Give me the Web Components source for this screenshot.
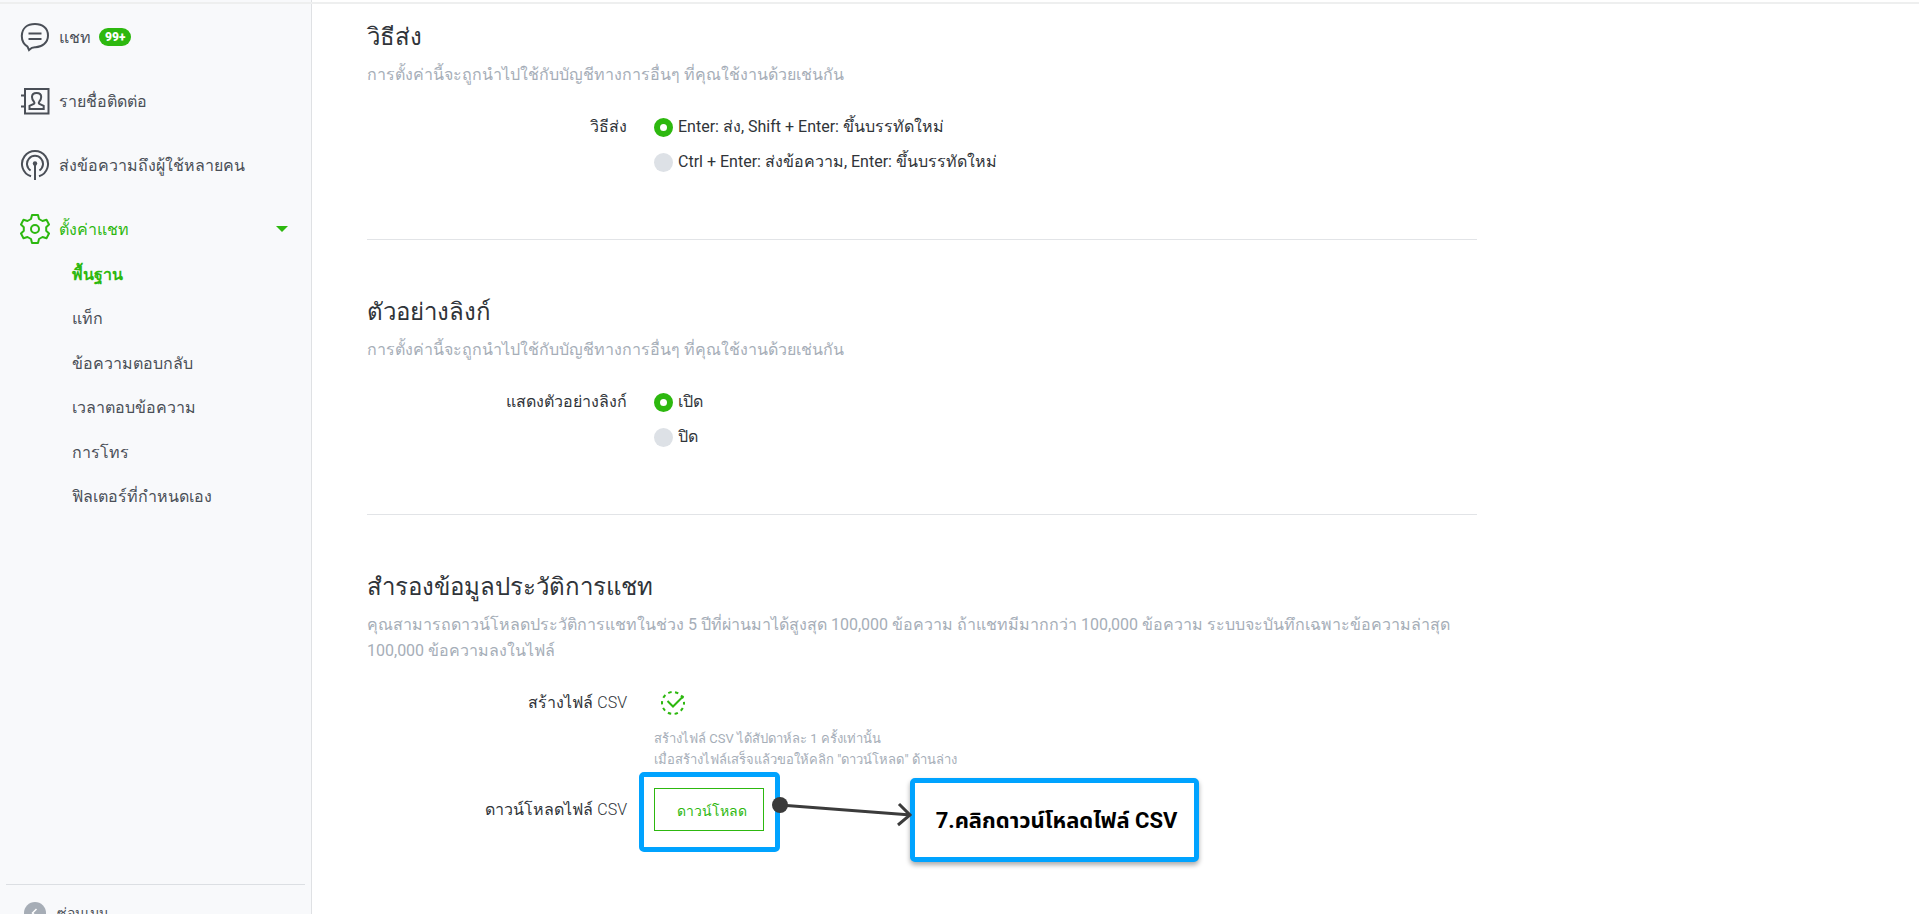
<!DOCTYPE html>
<html lang="th">
<head>
<meta charset="utf-8">
<meta name="viewport" content="width=device-width, initial-scale=1">
<title>ตั้งค่าแชท</title>
<style>
  body { margin: 0; font-family: Roboto, sans-serif; font-size: 16px; color: #303439; background: #fff; }
</style>
</head>
<body>
<chat-app></chat-app>

<script>
const define = (name, html, setup) => {
  const template = document.createElement('template');
  template.innerHTML = html;
  customElements.define(name, class extends HTMLElement {
    constructor() {
      super();
      this.attachShadow({ mode: 'open' }).append(template.content.cloneNode(true));
    }
    connectedCallback() { if (setup) setup(this, this.shadowRoot); }
  });
};

define('nav-item', `
  <style>
    :host { display: block; color: #4a4f57; }
    a { display: flex; align-items: center; height: 64px; padding: 0 23px 0 20px; color: inherit; text-decoration: none; }
    .icon { display: flex; width: 30px; margin-right: 9px; }
    :host([active]) { color: #2db80f; }
    .arrow { display: none; margin-left: auto; border: 6px solid transparent; border-top-color: currentColor; border-bottom: 0; }
    :host([active]) .arrow { display: block; }
  </style>
  <a href="#"><span class="icon"><slot name="icon"></slot></span><slot></slot><span class="arrow"></span></a>`);

define('count-badge', `
  <style>
    :host { display: block; margin-left: 8px; padding: 0 6px; height: 18px; border-radius: 9px; background: #2db80f; color: #fff; font-size: 12px; line-height: 18px; font-weight: 900; }
  </style><slot></slot>`);

define('sub-link', `
  <style>
    :host { display: flex; align-items: center; padding-left: 72px; color: #4a4f57; }
    :host([active]) { color: #2db80f; font-weight: 700; }
    a { color: inherit; text-decoration: none; }
  </style><a href="#"><slot></slot></a>`);

define('side-bar', `
  <style>
    :host { display: flex; flex-direction: column; box-sizing: border-box; width: 312px; flex: none; overflow: hidden; padding-top: 5px; background: #f8f9fb; border-right: 1px solid #dfe1e4; }
    .sub { display: grid; grid-auto-rows: 1fr; height: 267px; margin-top: -9px; }
    .foot { display: flex; align-items: center; flex: none; height: 56px; margin: auto 6px -27px; padding-left: 18px; gap: 11px; border-top: 1px solid #dcdfe3; color: #4a4f57; font-size: 14px; text-decoration: none; }
    svg { display: block; fill: none; stroke: currentColor; stroke-width: 2; }
  </style>
  <nav>
    <nav-item>
      <svg slot="icon" width="30" height="30" viewBox="0 0 30 30"><path d="M7.5 24.7C3.800 22.200 1.800 18.500 1.800 13.900 2 6 7.500 2 15 2s13 4.300 13 11.500S22 25 15.500 25.300c-2.500-.2-4.500.7-6.500 2.700z"/><path d="M8.500 11.500h13M8.500 17h13"/></svg>
      แชท<count-badge>99+</count-badge>
    </nav-item>
    <nav-item>
      <svg slot="icon" width="30" height="30" viewBox="0 0 30 30"><path d="M5 3h23.500v24.500H5zM1 9.500h4M1 20.500h4"/><path d="M9.500 23v-3.200l4.300-2c.8-.5.8-1.300.2-2-1.500-1.600-2-3.300-2-4.800 0-2.500 1.900-4 4.600-4s4.600 1.500 4.600 4c0 1.500-.5 3.200-2 4.800-.6.700-.6 1.500.2 2l4.300 2V23z"/></svg>
      รายชื่อติดต่อ
    </nav-item>
    <nav-item>
      <svg slot="icon" width="30" height="32" viewBox="0 0 30 32"><path d="M11 27.300A13 13 0 1 1 19 27.300M10.600 21.500A8 8 0 1 1 19.400 21.500M15 15v16"/><circle cx="15" cy="14.500" r="2.200" fill="currentColor" stroke="none"/></svg>
      ส่งข้อความถึงผู้ใช้หลายคน
    </nav-item>
    <nav-item active>
      <svg slot="icon" width="30" height="32" viewBox="0 0 30 32"><path stroke-linejoin="round" d="M12 2h6l1 4 3.500 2 4-1.200 2.500 4.700-2.800 2.800v3.400l2.800 2.800-2.500 4.700-4-1.200-3.500 2-1 4h-6l-1-4-3.500-2-4 1.200L1 20.500l2.800-2.800v-3.400L1 11.500l2.500-4.700 4 1.200L11 6z"/><circle cx="15" cy="16" r="4"/></svg>
      ตั้งค่าแชท
    </nav-item>
    <div class="sub">
      <sub-link active>พื้นฐาน</sub-link>
      <sub-link>แท็ก</sub-link>
      <sub-link>ข้อความตอบกลับ</sub-link>
      <sub-link>เวลาตอบข้อความ</sub-link>
      <sub-link>การโทร</sub-link>
      <sub-link>ฟิลเตอร์ที่กำหนดเอง</sub-link>
    </div>
  </nav>
  <a class="foot" href="#"><svg width="22" height="22" viewBox="0 0 22 22"><circle cx="11" cy="11" r="11" fill="#a6adb6" stroke="none"/><path d="M12.500 7l-4 4 4 4" stroke="#fff" stroke-width="1.500"/></svg>ซ่อนเมนู</a>`,
);

define('settings-section', `
  <style>
    :host { display: block; box-sizing: border-box; min-height: 275px; padding-top: 54px; border-bottom: 1px solid #e2e4e7; }
    :host([last]) { border-bottom: 0; }
    h2 { margin: 0; font-size: 24px; line-height: 36px; font-weight: 400; }
    p { margin: 7px 0 25px; line-height: 26px; color: #a6aeb8; font-size: 16px; }
  </style>
  <h2></h2><p><slot name="note"></slot></p><slot></slot>`,
  (el, root) => { root.querySelector('h2').textContent = el.getAttribute('heading'); });

define('form-row', `
  <style>
    :host { display: grid; grid-template-columns: 260px 1fr; column-gap: 27px; align-items: start; }
    :host([middle]) { align-items: center; }
    .label { text-align: right; line-height: 28px; }
  </style>
  <div class="label"><slot name="label"></slot></div><div><slot></slot></div>`);

define('radio-group', `
  <style>
    :host { display: flex; flex-direction: column; gap: 7px; }
    label { display: flex; align-items: center; gap: 5px; line-height: 28px; }
    input { appearance: none; width: 19px; height: 19px; margin: 0; border-radius: 50%; background: #dde1e6; }
    input:checked { border: 6px solid #2db80f; background: #fff; }
  </style>`,
  (el, root) => {
    el.getAttribute('options').split('|').forEach((text, i) => {
      const label = document.createElement('label');
      const input = Object.assign(document.createElement('input'), { type: 'radio', name: 'choice', checked: i === 0 });
      label.append(input, text);
      root.append(label);
    });
  });

define('download-step', `
  <style>
    :host { display: block; position: relative; width: 110px; }
    button { display: block; box-sizing: border-box; width: 110px; height: 43px; padding: 2px 0 0 6px; border: 1px solid #2db80f; background: #fff; color: #2db80f; font: inherit; font-size: 14px; }
    .ring { position: absolute; inset: -16px -16px -21px -15px; box-sizing: border-box; border: 5px solid #00a3ff; border-radius: 5px; pointer-events: none; }
    svg { position: absolute; left: 117px; top: 0; }
    .note { position: absolute; left: 256px; top: -10px; box-sizing: border-box; width: 289px; height: 84px; padding: 2px 0 0 4px; display: flex; align-items: center; justify-content: center; border: 5px solid #00a3ff; border-radius: 5px; background: #fff; color: #000; font-family: Roboto, "Noto Sans Thai", sans-serif; font-size: 22px; font-weight: 700; white-space: nowrap; box-shadow: 0 3px 5px #0005; }
  </style>
  <button type="button">ดาวน์โหลด</button>
  <div class="ring"></div>
  <div class="note">7.คลิกดาวน์โหลดไฟล์ CSV</div>
  <svg width="144" height="44" viewBox="0 0 144 44" fill="none" stroke="#3b3b3b" stroke-width="3"><circle cx="9" cy="17" r="8" fill="#3b3b3b" stroke="none"/><path d="M9 17l131 10M128 16l11 11-12 10"/></svg>`);

define('chat-app', `
  <style>
    :host { display: flex; height: 100vh; overflow: hidden; box-sizing: border-box; position: relative; }
    :host::before { content: ""; position: absolute; inset: 2px 0 auto; height: 2px; background: #eeefef; }
    main { flex: 1; min-width: 0; padding: 0 55px; margin-top: -35px; }
    .wrap { max-width: 1110px; }
    .light { font-weight: 300; }
    .hint { margin: 11px 0 18px; font-size: 13px; line-height: 21px; color: #a6aeb8; }
    .check { display: block; margin: 0 0 0 6px; fill: none; stroke: #2db80f; stroke-width: 2; }
  </style>
  <side-bar></side-bar>
  <main><div class="wrap">
    <settings-section heading="วิธีส่ง">
      <span slot="note">การตั้งค่านี้จะถูกนำไปใช้กับบัญชีทางการอื่นๆ ที่คุณใช้งานด้วยเช่นกัน</span>
      <form-row><span slot="label">วิธีส่ง</span>
        <radio-group options="Enter: ส่ง, Shift + Enter: ขึ้นบรรทัดใหม่|Ctrl + Enter: ส่งข้อความ, Enter: ขึ้นบรรทัดใหม่"></radio-group></form-row>
    </settings-section>
    <settings-section heading="ตัวอย่างลิงก์">
      <span slot="note">การตั้งค่านี้จะถูกนำไปใช้กับบัญชีทางการอื่นๆ ที่คุณใช้งานด้วยเช่นกัน</span>
      <form-row><span slot="label">แสดงตัวอย่างลิงก์</span>
        <radio-group options="เปิด|ปิด"></radio-group></form-row>
    </settings-section>
    <settings-section last heading="สำรองข้อมูลประวัติการแชท">
      <span slot="note">คุณสามารถดาวน์โหลดประวัติการแชทในช่วง 5 ปีที่ผ่านมาได้สูงสุด 100,000 ข้อความ ถ้าแชทมีมากกว่า 100,000 ข้อความ ระบบจะบันทึกเฉพาะข้อความล่าสุด 100,000 ข้อความลงในไฟล์</span>
      <form-row><span slot="label">สร้างไฟล์ <span class="light">CSV</span></span>
        <svg class="check" width="26" height="28" viewBox="0 0 26 28"><circle cx="13" cy="14" r="11" stroke-dasharray="3.400 3.510" stroke-dashoffset="1.700"/><path d="M7.500 12l5.500 5.500L23.500 7"/></svg>
        <div class="hint">สร้างไฟล์ CSV ได้สัปดาห์ละ 1 ครั้งเท่านั้น<br>เมื่อสร้างไฟล์เสร็จแล้วขอให้คลิก "ดาวน์โหลด" ด้านล่าง</div></form-row>
      <form-row middle><span slot="label">ดาวน์โหลดไฟล์ <span class="light">CSV</span></span>
        <download-step></download-step></form-row>
    </settings-section>
  </div></main>`);
</script>
</body>
</html>
